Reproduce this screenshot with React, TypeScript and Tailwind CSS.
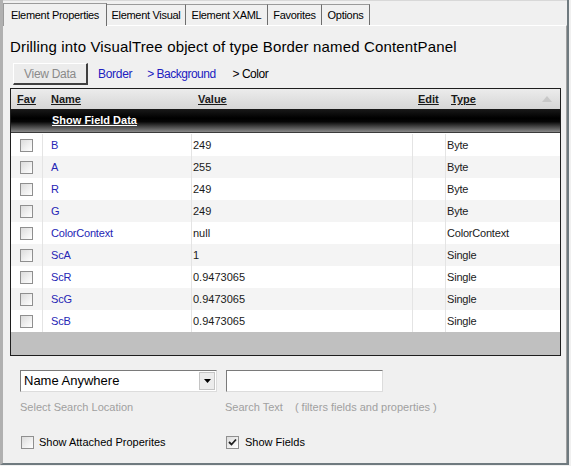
import React from "react";

const rows = [
  { name: "B", value: "249", type: "Byte" },
  { name: "A", value: "255", type: "Byte" },
  { name: "R", value: "249", type: "Byte" },
  { name: "G", value: "249", type: "Byte" },
  { name: "ColorContext", value: "null", type: "ColorContext" },
  { name: "ScA", value: "1", type: "Single" },
  { name: "ScR", value: "0.9473065", type: "Single" },
  { name: "ScG", value: "0.9473065", type: "Single" },
  { name: "ScB", value: "0.9473065", type: "Single" },
];

function Check({ checked = false }: { checked?: boolean }) {
  return (
    <div className="w-[13px] h-[13px] border border-[#8f8f8f] bg-gradient-to-br from-[#dcdcdc] to-white flex items-center justify-center shrink-0">
      {checked && (
        <svg width="9" height="9" viewBox="0 0 9 9">
          <path d="M1 4 L3.5 6.5 L8 1.5" stroke="#1f1f1f" strokeWidth="1.8" fill="none" />
        </svg>
      )}
    </div>
  );
}

function Tab({ label, selected = false, w }: { label: string; selected?: boolean; w: string }) {
  if (selected) {
    return (
      <div className={`${w} h-[23px] border-t border-l border-r border-[#9a9a9a] border-r-[#6e6e6e] bg-[#f0f0f0] flex items-center justify-center text-[11px] tracking-[-0.3px] whitespace-nowrap text-black -mb-px relative z-10`}>
        {label}
      </div>
    );
  }
  return (
    <div className={`${w} h-[21px] border-t border-r border-[#9a9a9a] border-r-[#6e6e6e] bg-[#f0f0f0] flex items-center justify-center text-[11px] tracking-[-0.3px] whitespace-nowrap text-black`}>
      {label}
    </div>
  );
}

export default function App() {
  return (
    <div
      className="w-[571px] h-[466px] bg-[#f0f0f0] relative overflow-hidden"
      style={{ fontFamily: '"Liberation Sans", Arial, sans-serif' }}
    >
      <div className="w-[569px] h-[465px] border-l-[3px] border-l-[#b0b0b0] border-r-2 border-r-[#6f7a7f] border-b-2 border-b-[#6f7a7f] flex flex-col">
        {/* tabs */}
        <div className="h-[25px] flex items-end border-t border-t-[#d8d8d8] relative">
          <Tab label="Element Properties" selected w="w-[104px]" />
          <Tab label="Element Visual" w="w-[79px]" />
          <Tab label="Element XAML" w="w-[82px]" />
          <Tab label="Favorites" w="w-[54px]" />
          <Tab label="Options" w="w-[48px]" />
        </div>
        {/* panel */}
        <div className="flex-1 border-t border-t-white border-r border-r-[#a0a0a0] flex flex-col pl-[7px]">
          <div className="mt-[12px] h-[17px] text-[15px] leading-[17px] tracking-[0.15px] text-black whitespace-nowrap">
            Drilling into VisualTree object of type Border named ContentPanel
          </div>
          <div className="mt-[8px] h-[22px] flex items-center text-[11px]">
            <div className="ml-[3px] w-[75px] h-[22px] bg-[#ececec] border-t border-l border-t-white border-l-white border-r-2 border-b-2 border-r-[#404040] border-b-[#404040] flex items-center justify-center text-[#8a8a8a] text-[12px] tracking-[-0.3px]">
              View Data
            </div>
            <span className="ml-[10px] text-[#2020c0] text-[12px] tracking-[-0.3px]">Border</span>
            <span className="ml-[15px] text-[#2020c0] text-[12px] tracking-[-0.5px]">&gt; Background</span>
            <span className="ml-[17px] text-black text-[12px] tracking-[-0.5px]">&gt; Color</span>
          </div>
          {/* grid */}
          <div className="mt-[3px] w-[551px] h-[268px] border border-[#1e1e1e] bg-[#c0c0c0] flex flex-col text-[11px]">
            <div className="h-[20px] bg-gradient-to-b from-[#ececec] to-[#d6d6d6] flex items-center font-bold text-[#1a1a1a] underline shrink-0">
              <div className="w-[32px] pl-[6px]">Fav</div>
              <div className="w-[149px] pl-[8px]">Name</div>
              <div className="w-[221px] pl-[6px]">Value</div>
              <div className="w-[33px] pl-[5px]">Edit</div>
              <div className="flex-1 pl-[5px] flex items-center justify-between pr-[8px]">
                <span>Type</span>
                <svg width="10" height="6" viewBox="0 0 10 6">
                  <path d="M0 6 L5 0 L10 6 Z" fill="#c8c8c8" />
                </svg>
              </div>
            </div>
            <div className="h-[23px] bg-[linear-gradient(to_bottom,#1a1a1a_0%,#000000_40%,#050505_55%,#8a8a8a_100%)] flex items-center shrink-0">
              <span className="ml-[41px] text-white font-bold underline">Show Field Data</span>
            </div>
            <div className="h-[1px] bg-[#3a3a3a] shrink-0" />
            <div className="h-[1px] bg-white shrink-0" />
            {rows.map((r, i) => (
              <div
                key={r.name}
                className={`h-[22px] flex items-center shrink-0 ${i % 2 === 0 ? "bg-white" : "bg-[#f4f4f4]"}`}
              >
                <div className="w-[32px] h-full flex items-center justify-center border-r border-[#e4e4e4]">
                  <Check />
                </div>
                <div className="w-[149px] h-full flex items-center pl-[8px] border-r border-[#e4e4e4] text-[#2525b5] tracking-[-0.2px]">
                  {r.name}
                </div>
                <div className="w-[221px] h-full flex items-center pl-[1px] border-r border-[#e4e4e4] text-[#1a1a1a]">
                  {r.value}
                </div>
                <div className="w-[33px] h-full border-r border-[#e4e4e4]" />
                <div className="flex-1 h-full flex items-center pl-[1px] text-[#1a1a1a] tracking-[-0.2px]">{r.type}</div>
              </div>
            ))}
          </div>
          {/* search */}
          <div className="mt-[14px] flex items-center ml-[10px]">
            <div className="w-[197px] h-[22px] bg-white border border-[#7a7a7a] border-r-[#dcdcdc] border-b-[#dcdcdc] flex items-center justify-between">
              <span className="pl-[3px] text-[13px] text-black">Name Anywhere</span>
              <div className="w-[16px] h-[18px] mr-[1px] bg-[#ececec] border border-[#c4c4c4] flex items-center justify-center">
                <svg width="7" height="4" viewBox="0 0 7 4">
                  <path d="M0 0 L7 0 L3.5 4 Z" fill="#000" />
                </svg>
              </div>
            </div>
            <div className="ml-[9px] w-[157px] h-[22px] bg-white border border-[#7a7a7a] border-r-[#dcdcdc] border-b-[#dcdcdc]" />
          </div>
          <div className="mt-[9px] h-[13px] leading-[13px] flex text-[11px] text-[#a0a0a0] ml-[10px] whitespace-nowrap">
            <span className="w-[205px]">Select Search Location</span>
            <span>Search Text</span>
            <span className="ml-[12px]">( filters fields and properties )</span>
          </div>
          <div className="mt-[20px] flex items-center text-[11px] text-black ml-[11px] whitespace-nowrap">
            <Check />
            <span className="ml-[5px] w-[187px]">Show Attached Properites</span>
            <Check checked />
            <span className="ml-[6px]">Show Fields</span>
          </div>
        </div>
      </div>
    </div>
  );
}
